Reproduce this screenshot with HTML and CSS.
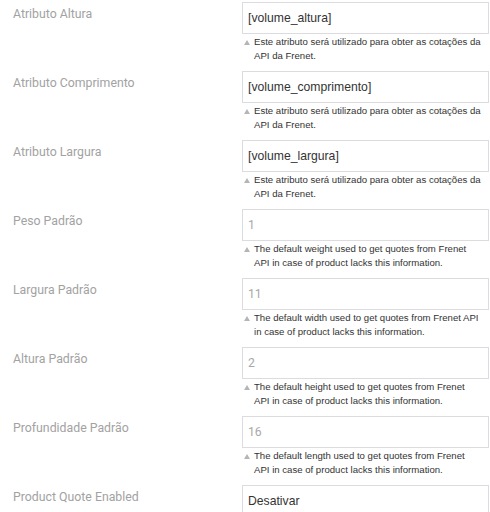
FILE: index.html
```html
<!DOCTYPE html>
<html>
<head>
<meta charset="utf-8">
<link rel="stylesheet" href="styles.css">
</head>
<body>
<div class="form">
  <div class="row">
    <div class="label">Atributo Altura</div>
    <div class="field">
      <div class="input">[volume_altura]</div>
      <div class="note"><span class="tri"><svg width="6" height="5" viewBox="0 0 6 5"><path d="M3 0L6 5H0Z"/></svg></span><span class="note-text">Este atributo será utilizado para obter as cotações da<br>API da Frenet.</span></div>
    </div>
  </div>
  <div class="row">
    <div class="label">Atributo Comprimento</div>
    <div class="field">
      <div class="input">[volume_comprimento]</div>
      <div class="note"><span class="tri"><svg width="6" height="5" viewBox="0 0 6 5"><path d="M3 0L6 5H0Z"/></svg></span><span class="note-text">Este atributo será utilizado para obter as cotações da<br>API da Frenet.</span></div>
    </div>
  </div>
  <div class="row">
    <div class="label">Atributo Largura</div>
    <div class="field">
      <div class="input">[volume_largura]</div>
      <div class="note"><span class="tri"><svg width="6" height="5" viewBox="0 0 6 5"><path d="M3 0L6 5H0Z"/></svg></span><span class="note-text">Este atributo será utilizado para obter as cotações da<br>API da Frenet.</span></div>
    </div>
  </div>
  <div class="row">
    <div class="label">Peso Padrão</div>
    <div class="field">
      <div class="input muted">1</div>
      <div class="note"><span class="tri"><svg width="6" height="5" viewBox="0 0 6 5"><path d="M3 0L6 5H0Z"/></svg></span><span class="note-text">The default weight used to get quotes from Frenet<br>API in case of product lacks this information.</span></div>
    </div>
  </div>
  <div class="row">
    <div class="label">Largura Padrão</div>
    <div class="field">
      <div class="input muted">11</div>
      <div class="note"><span class="tri"><svg width="6" height="5" viewBox="0 0 6 5"><path d="M3 0L6 5H0Z"/></svg></span><span class="note-text">The default width used to get quotes from Frenet API<br>in case of product lacks this information.</span></div>
    </div>
  </div>
  <div class="row">
    <div class="label">Altura Padrão</div>
    <div class="field">
      <div class="input muted">2</div>
      <div class="note"><span class="tri"><svg width="6" height="5" viewBox="0 0 6 5"><path d="M3 0L6 5H0Z"/></svg></span><span class="note-text">The default height used to get quotes from Frenet<br>API in case of product lacks this information.</span></div>
    </div>
  </div>
  <div class="row">
    <div class="label">Profundidade Padrão</div>
    <div class="field">
      <div class="input muted">16</div>
      <div class="note"><span class="tri"><svg width="6" height="5" viewBox="0 0 6 5"><path d="M3 0L6 5H0Z"/></svg></span><span class="note-text">The default length used to get quotes from Frenet<br>API in case of product lacks this information.</span></div>
    </div>
  </div>
  <div class="row">
    <div class="label">Product Quote Enabled</div>
    <div class="field">
      <div class="input">Desativar</div>
    </div>
  </div>
</div>
</body>
</html>
```
FILE: styles.css
```css
html, body {
  margin: 0;
  padding: 0;
  background: #fff;
}
.form {
  padding-top: 2px;
}
.row {
  display: grid;
  grid-template-columns: 242px 247px;
  height: 69px;
}
.label {
  font-family: Roboto, "Liberation Sans", sans-serif;
  font-size: 12.3px;
  line-height: 16px;
  color: #a2a2a2;
  padding: 4px 0 0 13px;
}
.field {
  display: flex;
  flex-direction: column;
}
.input {
  box-sizing: border-box;
  height: 32px;
  border: 1px solid #dcdbe0;
  padding: 0 5px;
  display: flex;
  align-items: center;
  font-family: "Liberation Sans", Arial, sans-serif;
  font-size: 12.2px;
  color: #333;
}
.input.muted {
  font-family: Roboto, "Liberation Sans", sans-serif;
  color: #a8a8a8;
}
.note {
  display: flex;
  font-family: "Liberation Sans", Arial, sans-serif;
  font-size: 9.6px;
  line-height: 14px;
  color: #333;
  padding-top: 1px;
}
.tri {
  flex: 0 0 12px;
  display: flex;
  padding: 5px 0 0 2px;
  box-sizing: border-box;
  height: 14px;
}
.tri svg {
  fill: #b5b5b5;
}
.note-text {
  width: 235px;
  white-space: nowrap;
}
```
